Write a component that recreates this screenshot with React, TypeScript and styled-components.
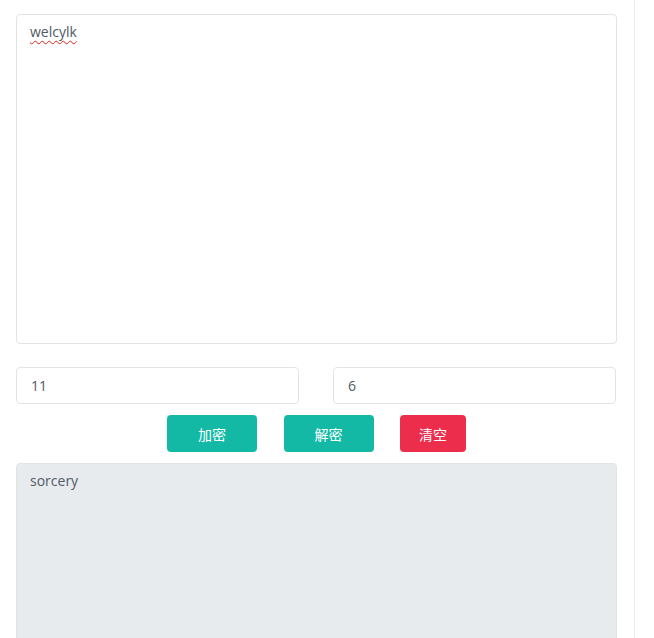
import React from "react";
import styled, { createGlobalStyle } from "styled-components";

const Global = createGlobalStyle`
  html, body { margin: 0; padding: 0; background: #fff; }
  body { font-family: "Open Sans", "Noto Sans CJK SC", sans-serif; }
  * { box-sizing: border-box; }
`;

const Page = styled.div`
  width: 635px;
  height: 638px;
  overflow: hidden;
  border-right: 1px solid #ececec;
  padding: 14px 17px 0 16px;
  display: flex;
  flex-direction: column;
`;

const TextBox = styled.div<{ $readonly?: boolean; $h: number }>`
  width: 100%;
  height: ${(p) => p.$h}px;
  flex-shrink: 0;
  border: 1px solid #e3e3e3;
  border-radius: 4px;
  background: ${(p) => (p.$readonly ? "#e8ebee" : "#fff")};
  padding: 6px 13px;
  font-size: 14px;
  line-height: 21px;
  color: #515a66;
`;

const Misspelled = styled.span`
  text-decoration: underline wavy #e0201b;
  text-decoration-thickness: 1px;
  text-underline-offset: 3px;
`;

const Row = styled.div`
  display: grid;
  grid-template-columns: 283px 1fr;
  column-gap: 34px;
  margin-top: 23px;
  padding-right: 1px;
`;

const Field = styled.input`
  height: 37px;
  width: 100%;
  border: 1px solid #e3e3e3;
  border-radius: 4px;
  padding: 0 14px;
  font-family: "Open Sans", sans-serif;
  font-size: 14px;
  color: #515a66;
  background: #fff;
  outline: none;
`;

const Buttons = styled.div`
  display: flex;
  justify-content: center;
  gap: 26.5px;
  margin-top: 11px;
  margin-bottom: 11px;
`;

const Btn = styled.button<{ $w: number; $danger?: boolean }>`
  width: ${(p) => p.$w}px;
  height: 37px;
  border: none;
  border-radius: 4px;
  background: ${(p) => (p.$danger ? "#ec2d4b" : "#14b9a6")};
  color: #fff;
  font-family: "Noto Sans CJK SC", sans-serif;
  font-size: 14px;
  padding: 0;
  cursor: pointer;
`;

export default function App() {
  return (
    <>
      <Global />
      <Page>
        <TextBox $h={330} role="textbox">
          <Misspelled>welcylk</Misspelled>
        </TextBox>
        <Row>
          <Field defaultValue="11" />
          <Field defaultValue="6" />
        </Row>
        <Buttons>
          <Btn $w={90}>加密</Btn>
          <Btn $w={90}>解密</Btn>
          <Btn $w={66} $danger>清空</Btn>
        </Buttons>
        <TextBox $h={200} $readonly role="textbox">
          sorcery
        </TextBox>
      </Page>
    </>
  );
}
